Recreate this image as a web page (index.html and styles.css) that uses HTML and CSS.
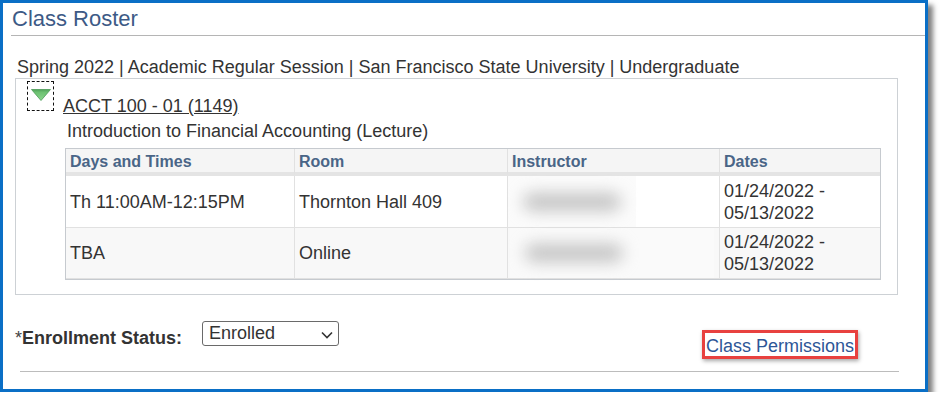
FILE: index.html
```html
<!DOCTYPE html>
<html lang="en">
<head>
<meta charset="utf-8">
<title>Class Roster</title>
<link rel="stylesheet" href="styles.css">
</head>
<body>
<div class="frame">
  <div class="title-bar">Class Roster</div>
  <div class="term">Spring 2022 | Academic Regular Session | San Francisco State University | Undergraduate</div>
  <div class="course-box">
    <div class="course-head">
      <span class="toggle">
        <svg width="20" height="12" viewBox="0 0 20 12">
          <defs>
            <linearGradient id="tg" x1="0" y1="0" x2="0" y2="1">
              <stop offset="0" stop-color="#4f9f58"/>
              <stop offset="0.25" stop-color="#6cc171"/>
              <stop offset="1" stop-color="#8ad68c"/>
            </linearGradient>
          </defs>
          <polygon points="0.5,0.5 19.5,0.5 10,11.5" fill="url(#tg)" stroke="#4a9a55" stroke-width="0.8" stroke-linejoin="round"/>
        </svg>
      </span>
      <a class="course-link" href="#">ACCT 100 - 01 (1149)</a>
    </div>
    <div class="course-title">Introduction to Financial Accounting (Lecture)</div>
    <div class="meetings">
      <div class="cell head">Days and Times</div>
      <div class="cell head">Room</div>
      <div class="cell head">Instructor</div>
      <div class="cell head last">Dates</div>

      <div class="cell r1">Th 11:00AM-12:15PM</div>
      <div class="cell r1">Thornton Hall 409</div>
      <div class="cell r1 inst"><div class="redact r1pad"><div class="blur"></div></div></div>
      <div class="cell r1 last">01/24/2022 -<br>05/13/2022</div>

      <div class="cell r2">TBA</div>
      <div class="cell r2">Online</div>
      <div class="cell r2 inst"><div class="redact r2pad"><div class="blur"></div></div></div>
      <div class="cell r2 last">01/24/2022 -<br>05/13/2022</div>
    </div>
  </div>
  <div class="status-row">
    <div class="status-label"><span class="req">*</span>Enrollment Status:</div>
    <div class="select">
      <span class="select-text">Enrolled</span>
      <svg class="chev" width="12" height="8" viewBox="0 0 12 8"><polyline points="1,1.5 6,6.5 11,1.5" fill="none" stroke="#333" stroke-width="1.6"/></svg>
    </div>
    <a class="perm-link" href="#">Class Permissions</a>
  </div>
  <div class="bottom-rule"></div>
</div>
</body>
</html>
```

FILE: styles.css
```css
html, body {
  margin: 0;
  padding: 0;
  background: #fff;
}
body {
  font-family: "Liberation Sans", Arial, sans-serif;
  color: #333;
}
.frame {
  width: 928px;
  height: 392px;
  box-sizing: border-box;
  border: 3px solid #0a6fc6;
  background: #fff;
  box-shadow: 5px 5px 5px rgba(0, 0, 0, 0.5);
}
.title-bar {
  margin-left: 8px;
  padding: 3px 0 0 1px;
  height: 29px;
  border-bottom: 1px solid #b5b5b5;
  font-size: 22px;
  line-height: 25px;
  color: #3d5a86;
}
.term {
  margin: 21px 0 0 14px;
  font-size: 18px;
  line-height: 20px;
  color: #333;
}
.course-box {
  margin: 1px 0 0 12px;
  width: 883px;
  box-sizing: border-box;
  border: 1px solid #cdd1d5;
  padding-bottom: 14px;
}
.course-head {
  display: flex;
  align-items: flex-start;
  margin: 2px 0 0 11px;
}
.toggle {
  width: 27px;
  height: 30px;
  box-sizing: border-box;
  border: 1px dashed #111;
  display: flex;
  justify-content: center;
  padding-top: 7px;
}
.toggle svg {
  display: block;
}
.course-link {
  margin: 15px 0 0 9px;
  font-size: 18px;
  line-height: 20px;
  color: #333;
  text-decoration: underline;
}
.course-title {
  margin: 5px 0 0 51px;
  font-size: 18px;
  line-height: 20px;
  color: #333;
}
.meetings {
  margin: 7px 0 0 49px;
  display: grid;
  grid-template-columns: 229px 213px 212px 160px;
  grid-template-rows: 27px 52px 51px;
  width: 816px;
  box-sizing: border-box;
  border: 1px solid #c6cacf;
}
.cell {
  box-sizing: border-box;
  border-right: 1px solid #e1e1e1;
  border-bottom: 1px solid #e1e1e1;
  padding: 0 4px;
  font-size: 18px;
  line-height: 22px;
  color: #333;
  display: flex;
  flex-direction: column;
  justify-content: center;
}
.cell.last {
  border-right: none;
}
.cell.head {
  background: #f5f5f5;
  border-bottom: 4px solid #e4e4e4;
  font-size: 16px;
  font-weight: bold;
  line-height: 20px;
  color: #4a6587;
  justify-content: flex-start;
  padding-top: 3px;
}
.cell.r1 {
  background: #fff;
}
.cell.r2 {
  background: #f8f8f8;
}
.cell.inst {
  padding: 0;
  justify-content: stretch;
}
.redact {
  height: 100%;
  display: flex;
  align-items: center;
}
.r1pad {
  width: 128px;
  background: #fbfbfb;
}
.r2pad {
  width: 204px;
  margin-left: 2px;
  background: #fafafa;
}
.blur {
  width: 98px;
  height: 18px;
  margin-left: 15px;
  background: #c4c4c4;
  border-radius: 9px;
  filter: blur(8px);
}
.status-row {
  display: flex;
  align-items: flex-start;
  margin: 26px 0 0 12px;
}
.status-label {
  margin-top: 7px;
  font-size: 18px;
  line-height: 20px;
  font-weight: bold;
  color: #333;
}
.req {
  font-weight: normal;
  color: #444;
}
.select {
  margin-left: 20px;
  width: 137px;
  height: 25px;
  box-sizing: border-box;
  border: 1px solid #6a6a6a;
  border-radius: 3px;
  display: flex;
  align-items: flex-start;
  justify-content: space-between;
  padding: 0 5px 0 6px;
}
.select-text {
  font-size: 18px;
  line-height: 23px;
  color: #333;
}
.chev {
  margin-top: 9px;
}
.perm-link {
  margin: 9px 67px 0 auto;
  border: 3px solid #e8413f;
  padding: 3px 1px 0 1px;
  font-size: 18px;
  line-height: 20px;
  color: #2d5697;
  text-decoration: none;
  box-shadow: 1px 2px 4px rgba(0, 0, 0, 0.35);
}
.bottom-rule {
  margin: 12px 0 0 17px;
  width: 879px;
  border-top: 1px solid #bcbcbc;
}
```
